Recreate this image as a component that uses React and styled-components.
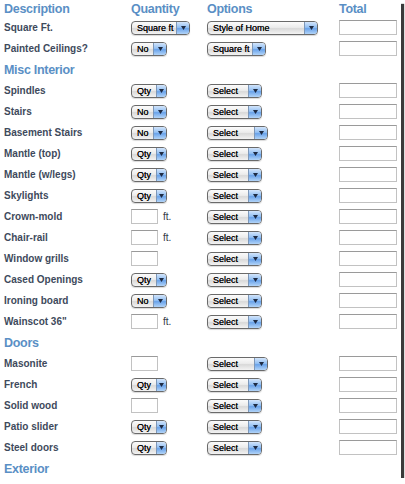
import React from "react";
import styled, { createGlobalStyle } from "styled-components";

const GlobalStyle = createGlobalStyle`
  html, body { margin: 0; padding: 0; background: #ffffff; }
  body { font-family: "Liberation Sans", Arial, sans-serif; }
`;

const Frame = styled.div`
  width: 397px;
  height: 478px;
  padding-left: 4px;
  background: #ffffff;
  box-shadow: 3px 4px 1px 0 #3a3a3a;
  overflow: hidden;
`;

const Row = styled.div`
  display: grid;
  grid-template-columns: 127px 76px 132px 58px;
  align-items: center;
  height: ${(p) => (p.$top ? "17px" : "21px")};
`;

const Heading = styled.div`
  font-size: 12.5px;
  font-weight: bold;
  letter-spacing: -0.3px;
  color: #5a8fc5;
  white-space: nowrap;
`;

const Label = styled.div`
  font-size: 10px;
  font-weight: bold;
  color: #3e4a5c;
  white-space: nowrap;
`;

const Cell = styled.div`
  display: flex;
  align-items: center;
  gap: 5px;
`;

const SelectBox = styled.div`
  box-sizing: border-box;
  display: flex;
  width: ${(p) => p.$w}px;
  height: 14px;
  border: 1px solid #6a6a6a;
  border-radius: 4px;
  overflow: hidden;
  background: linear-gradient(#fbfbfb 0%, #ececec 45%, #d9d9d9 55%, #f3f3f3 100%);
  box-shadow: 0 1px 1px rgba(0, 0, 0, 0.15);
`;

const SelectText = styled.span`
  flex: 1;
  padding-left: 5px;
  font-size: 9px;
  line-height: 12px;
  color: #000000;
  text-shadow: 0 0 0.4px rgba(0, 0, 0, 0.8);
  white-space: nowrap;
  overflow: hidden;
`;

const SelectButton = styled.span`
  flex: 0 0 ${(p) => p.$bw || 11}px;
  display: flex;
  align-items: center;
  justify-content: center;
  border-left: 1px solid #7d97b8;
  background: linear-gradient(#d3e5fb 0%, #93c0f3 45%, #6aa3ea 55%, #b2d4f8 100%);
`;

const TextBox = styled.div`
  box-sizing: border-box;
  width: ${(p) => p.$w}px;
  height: 15px;
  border: 1px solid #c2c2c2;
  border-top-color: #9a9a9a;
  background: #ffffff;
`;

const Unit = styled.span`
  font-size: 10px;
  color: #333a44;
`;

const Arrow = () => (
  <svg width="5" height="4" viewBox="0 0 5 4">
    <path d="M0 0 L5 0 L2.5 4 Z" fill="#1d2b44" />
  </svg>
);

const Select = ({ w, text, bw }) => (
  <SelectBox $w={w}>
    <SelectText>{text}</SelectText>
    <SelectButton $bw={bw}>
      <Arrow />
    </SelectButton>
  </SelectBox>
);

const qty = {
  qty: <Select w={36} text="Qty" bw={9} />,
  no: <Select w={36} text="No" bw={12} />,
  sqft: <Select w={59} text="Square ft" bw={12} />,
  ft: (
    <>
      <TextBox $w={27} />
      <Unit>ft.</Unit>
    </>
  ),
  box: <TextBox $w={27} />,
};

const rows = [
  { label: "Square Ft.", q: "sqft", o: <Select w={111} text="Style of Home" bw={12} /> },
  { label: "Painted Ceilings?", q: "no", o: <Select w={59} text="Square ft" bw={12} /> },
  { heading: "Misc Interior" },
  { label: "Spindles", q: "qty", o: "sel" },
  { label: "Stairs", q: "no", o: "sel" },
  { label: "Basement Stairs", q: "no", o: "wide" },
  { label: "Mantle (top)", q: "qty", o: "sel" },
  { label: "Mantle (w/legs)", q: "qty", o: "sel" },
  { label: "Skylights", q: "qty", o: "sel" },
  { label: "Crown-mold", q: "ft", o: "sel" },
  { label: "Chair-rail", q: "ft", o: "sel" },
  { label: "Window grills", q: "box", o: "sel" },
  { label: "Cased Openings", q: "qty", o: "sel" },
  { label: "Ironing board", q: "no", o: "sel" },
  { label: "Wainscot 36\"", q: "ft", o: "sel" },
  { heading: "Doors" },
  { label: "Masonite", q: "box", o: "wide" },
  { label: "French", q: "qty", o: "sel" },
  { label: "Solid wood", q: "box", o: "sel" },
  { label: "Patio slider", q: "qty", o: "sel" },
  { label: "Steel doors", q: "qty", o: "sel" },
  { heading: "Exterior" },
];

const option = (o) => {
  if (o === "sel") return <Select w={55} text="Select" bw={12} />;
  if (o === "wide") return <Select w={61} text="Select" bw={12} />;
  return o;
};

export default function App() {
  return (
    <>
      <GlobalStyle />
      <Frame>
        <Row $top>
          <Heading>Description</Heading>
          <Heading>Quantity</Heading>
          <Heading>Options</Heading>
          <Heading>Total</Heading>
        </Row>
        {rows.map((r, i) =>
          r.heading ? (
            <Row key={i}>
              <Heading>{r.heading}</Heading>
            </Row>
          ) : (
            <Row key={i}>
              <Label>{r.label}</Label>
              <Cell>{qty[r.q]}</Cell>
              <Cell>{option(r.o)}</Cell>
              <Cell>
                <TextBox $w={58} />
              </Cell>
            </Row>
          )
        )}
      </Frame>
    </>
  );
}
